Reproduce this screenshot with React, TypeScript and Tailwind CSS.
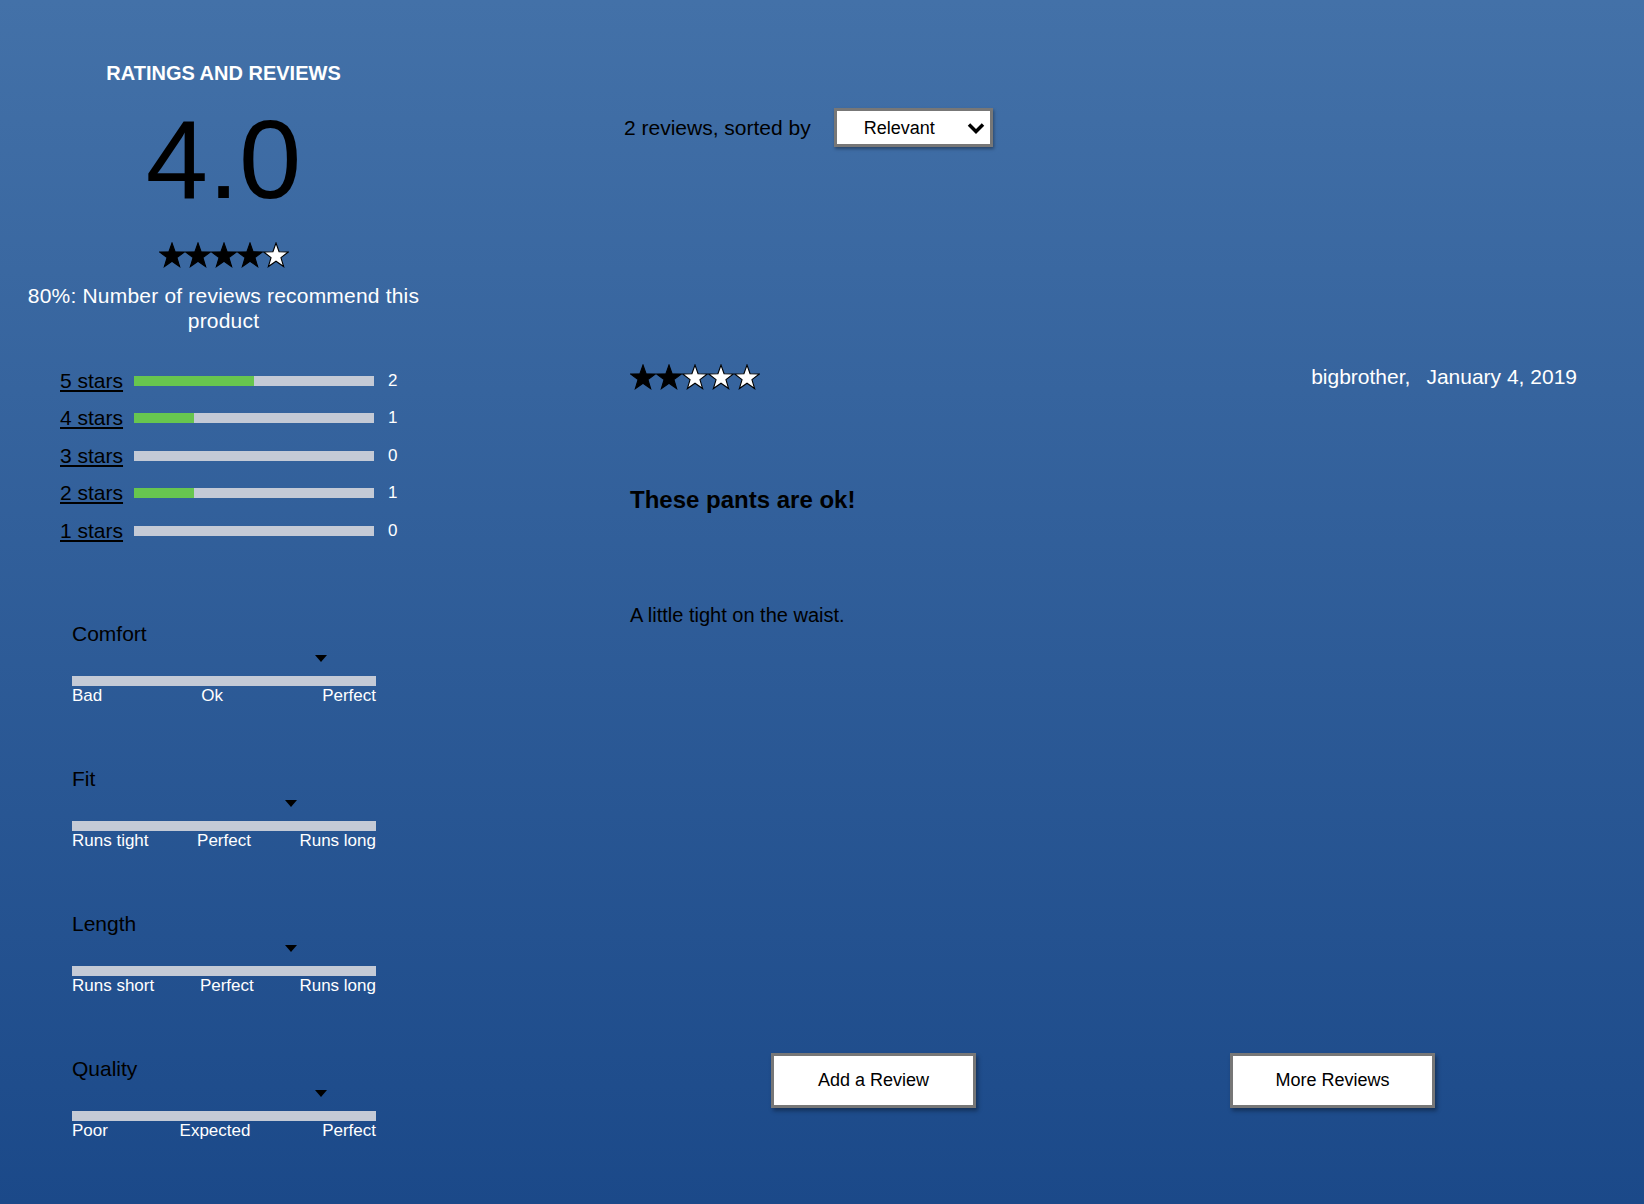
import React from "react"

const STAR_POINTS =
  "13,1 16.06,9.79 25.36,9.98 17.95,15.61 20.64,24.52 13,19.2 5.36,24.52 8.05,15.61 0.64,9.98 9.94,9.79"

function Star({ filled }: { filled: boolean }) {
  return (
    <svg width="26" height="26" viewBox="0 0 26 26" className="block">
      <polygon
        points={STAR_POINTS}
        fill={filled ? "#000" : "#fff"}
        stroke="#000"
        strokeWidth="1.1"
        strokeLinejoin="miter"
      />
    </svg>
  )
}

function Stars({ count }: { count: number }) {
  return (
    <div className="flex">
      {[1, 2, 3, 4, 5].map((n) => (
        <Star key={n} filled={n <= count} />
      ))}
    </div>
  )
}

const breakdown = [
  { label: "5 stars", pct: 50, count: 2 },
  { label: "4 stars", pct: 25, count: 1 },
  { label: "3 stars", pct: 0, count: 0 },
  { label: "2 stars", pct: 25, count: 1 },
  { label: "1 stars", pct: 0, count: 0 },
]

const characteristics = [
  { name: "Comfort", offset: "ml-[243px]", labels: ["Bad", "Ok", "Perfect"] },
  { name: "Fit", offset: "ml-[213px]", labels: ["Runs tight", "Perfect", "Runs long"] },
  { name: "Length", offset: "ml-[213px]", labels: ["Runs short", "Perfect", "Runs long"] },
  { name: "Quality", offset: "ml-[243px]", labels: ["Poor", "Expected", "Perfect"] },
]

export default function App() {
  return (
    <div className="min-h-screen h-[1204px] w-full bg-linear-to-b from-[#4371a8] to-[#1b4989] font-['Liberation_Sans',Arial,sans-serif] flex">
      {/* Left: summary */}
      <div className="w-[447px] shrink-0 flex flex-col">
        <h2 className="mt-[61px] text-center text-[20px] leading-[24px] font-bold text-white">
          RATINGS AND REVIEWS
        </h2>
        <div className="mt-[19px] text-center text-[112px] leading-[112px] text-black">4.0</div>
        <div className="mt-[26px] flex justify-center">
          <Stars count={4} />
        </div>
        <p className="mt-[15px] text-center text-[21px] leading-[25px] tracking-[0.2px] text-white">
          80%: Number of reviews recommend this product
        </p>

        {/* Rating breakdown */}
        <div className="mt-[29px] pl-[60px] flex flex-col">
          {breakdown.map((row) => (
            <div key={row.label} className="flex items-center h-[37.5px]">
              <a className="w-[74px] text-[21px] leading-[24px] text-black underline decoration-2 underline-offset-2 cursor-pointer">
                {row.label}
              </a>
              <div className="w-[240px] h-[10px] bg-[#c4cad6]">
                <div className="h-full bg-[#67c64f]" style={{ width: `${row.pct}%` }} />
              </div>
              <span className="ml-[14px] text-[17px] leading-[20px] text-white">{row.count}</span>
            </div>
          ))}
        </div>

        {/* Characteristics */}
        <div className="mt-[72px] pl-[72px] flex flex-col gap-[61px]">
          {characteristics.map((c) => (
            <div key={c.name} className="w-[304px] flex flex-col">
              <div className="text-[21px] leading-[24px] text-black">{c.name}</div>
              <div className="mt-[9px] h-[7px] flex">
                <svg width="12" height="7" viewBox="0 0 12 7" className={`block ${c.offset}`}>
                  <polygon points="0,0 12,0 6,7" fill="#000" />
                </svg>
              </div>
              <div className="mt-[14px] h-[10px] bg-[#c4cad6]" />
              <div className="flex justify-between text-[17px] leading-[20px] text-white">
                {c.labels.map((l) => (
                  <span key={l}>{l}</span>
                ))}
              </div>
            </div>
          ))}
        </div>
      </div>

      {/* Right: review list */}
      <div className="ml-[177px] w-[953px] flex flex-col">
        <div className="mt-[108px] flex items-center gap-[23px]">
          <span className="text-[21px] leading-[24px] text-black">2 reviews, sorted by</span>
          <div className="w-[159px] h-[39px] bg-white border-[3px] border-[#777] shadow-[1px_2px_3px_rgba(0,0,0,0.35)] flex items-center justify-between pl-[27px] pr-[5px]">
            <span className="text-[18px] leading-[20px] text-black">Relevant</span>
            <svg width="18" height="12" viewBox="0 0 18 12" className="block">
              <polyline points="2,2.5 9,9.5 16,2.5" fill="none" stroke="#000" strokeWidth="3.5" />
            </svg>
          </div>
        </div>

        <div className="pl-[6px] flex flex-col">
          <div className="mt-[217px] flex items-center justify-between">
            <Stars count={2} />
            <div className="flex text-[21px] leading-[24px] text-white">
              <span>bigbrother,</span>
              <span className="ml-[16px]">January 4, 2019</span>
            </div>
          </div>
          <h3 className="mt-[96px] text-[24px] leading-[28px] font-bold text-black">These pants are ok!</h3>
          <p className="mt-[89px] text-[20px] leading-[24px] text-black">A little tight on the waist.</p>
        </div>

        <div className="mt-[426px] pl-[147px] flex gap-[254px]">
          <button className="w-[205px] h-[55px] bg-white border-[3px] border-[#777] shadow-[2px_3px_4px_rgba(0,0,0,0.35)] text-[18px] text-black">
            Add a Review
          </button>
          <button className="w-[205px] h-[55px] bg-white border-[3px] border-[#777] shadow-[2px_3px_4px_rgba(0,0,0,0.35)] text-[18px] text-black">
            More Reviews
          </button>
        </div>
      </div>
    </div>
  )
}
